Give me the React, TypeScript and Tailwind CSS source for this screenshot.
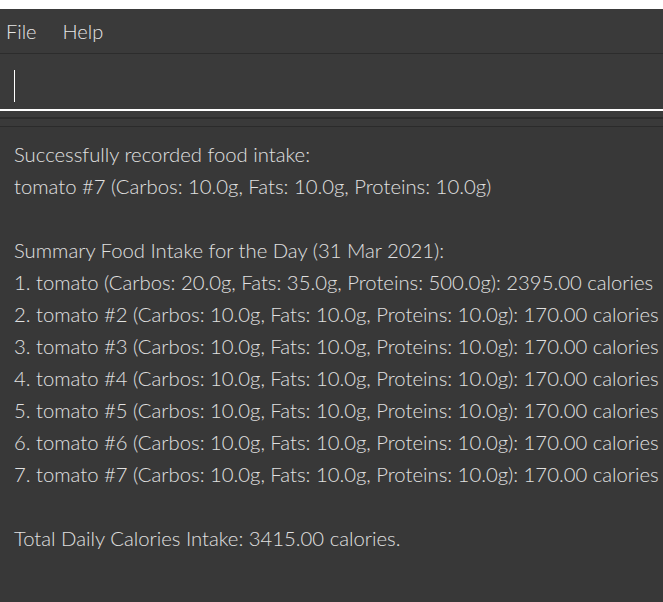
import React from "react"

const lines = [
  "Successfully recorded food intake:",
  "tomato #7 (Carbos: 10.0g, Fats: 10.0g, Proteins: 10.0g)",
  "",
  "Summary Food Intake for the Day (31 Mar 2021):",
  "1. tomato (Carbos: 20.0g, Fats: 35.0g, Proteins: 500.0g): 2395.00 calories",
  "2. tomato #2 (Carbos: 10.0g, Fats: 10.0g, Proteins: 10.0g): 170.00 calories",
  "3. tomato #3 (Carbos: 10.0g, Fats: 10.0g, Proteins: 10.0g): 170.00 calories",
  "4. tomato #4 (Carbos: 10.0g, Fats: 10.0g, Proteins: 10.0g): 170.00 calories",
  "5. tomato #5 (Carbos: 10.0g, Fats: 10.0g, Proteins: 10.0g): 170.00 calories",
  "6. tomato #6 (Carbos: 10.0g, Fats: 10.0g, Proteins: 10.0g): 170.00 calories",
  "7. tomato #7 (Carbos: 10.0g, Fats: 10.0g, Proteins: 10.0g): 170.00 calories",
  "",
  "Total Daily Calories Intake: 3415.00 calories.",
]

export default function App() {
  return (
    <div className="w-[663px] h-[602px] overflow-hidden bg-white pt-[9px] flex flex-col font-['Lato',sans-serif] font-light">
      {/* Menu bar */}
      <div className="h-[45px] shrink-0 bg-[#3a3a3a] border-b border-[#2c2c2c] flex items-center pb-[1px] text-[20px] text-[#e6e6e6]">
        <span className="pl-[6px]">File</span>
        <span className="pl-[26px]">Help</span>
      </div>

      {/* Command box */}
      <div className="h-[57px] shrink-0 bg-[#3a3a3a] border-b-2 border-white flex items-end pb-[7px] pl-[14px]">
        <div className="w-px h-[32px] bg-white" />
      </div>

      {/* Divider */}
      <div className="h-[6px] shrink-0 bg-[#3a3a3a]" />
      <div className="h-[2px] shrink-0 bg-[#2d2d2d]" />
      <div className="h-[7px] shrink-0 bg-[#3a3a3a]" />
      <div className="h-px shrink-0 bg-[#2b2b2b]" />

      {/* Result display */}
      <div className="flex-1 bg-[#383838] pl-[14px] pt-[11px] text-[20.3px] leading-[32px] text-[#e0e0e0] whitespace-pre overflow-hidden">
        {lines.map((line, i) => (
          <div key={i} className="h-[32px]">
            {line}
          </div>
        ))}
      </div>
    </div>
  )
}
